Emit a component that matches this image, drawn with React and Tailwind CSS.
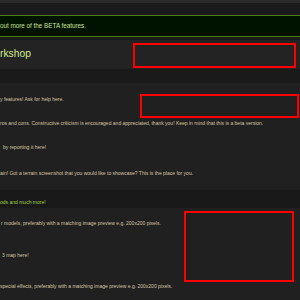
import React from 'react';

// Row of small forum description text, vertically centred in a fixed-height strip
function Line({ children, className = '' }) {
  return (
    <div className={`flex items-center whitespace-nowrap text-[5px] text-[#d6c6a2] ${className}`}>
      {children}
    </div>
  );
}

function Redact({ className }) {
  return <div className={`absolute border-2 border-[#ff0000] ${className}`} />;
}

export default function App() {
  return (
    <div className="relative w-[300px] h-[300px] overflow-hidden bg-[#202020] font-['Liberation_Sans',Arial,sans-serif]">
      <div className="h-[3px] bg-[#2b2b2b]" />
      <div className="h-[12px] bg-[#1a1a1a]" />

      {/* beta notice */}
      <div className="h-[22px] flex items-center border-y border-[#4d7c12] bg-[#001300] whitespace-nowrap text-[6.3px] text-[#cbe09a]">
        out more of the BETA features.
      </div>
      <div className="h-[3px] bg-[#1a1a1a]" />

      {/* section title */}
      <div className="h-[29px] flex items-center bg-[#232323] text-[10.3px] text-[#d2ec8a] leading-none">
        rkshop
      </div>
      <div className="h-[14px] bg-[#1a1a1a]" />

      {/* forums */}
      <div className="flex flex-col h-[107px] pt-[5px] bg-[#202020]">
        <Line className="h-[24px]">y features! Ask for help here.</Line>
        <Line className="h-[24px]">
          ros and cons. Constructive criticism is encouraged and appreciated, thank you! Keep in mind that this is a beta version.
        </Line>
        <Line className="h-[24px] pl-[3px]">by reporting it here!</Line>
        <Line className="h-[28px]">
          ain! Got a terrain screenshot that you would like to showcase? This is the place for you.
        </Line>
      </div>

      {/* category bar */}
      <div className="h-[18px] flex items-end pb-[2px] bg-[#191919] whitespace-nowrap text-[5px] text-[#a6d23c]">
        ods and much more!
      </div>

      <div className="flex flex-col pt-[4px] bg-[#202020]">
        <Line className="h-[24px] pl-[1px]">
          r models, preferably with a matching image preview e.g. 200x200 pixels.
        </Line>
        <Line className="h-[8px]" />
        <Line className="h-[24px] pl-[2px]">3 map here!</Line>
        <Line className="h-[7px]" />
        <Line className="h-[24px]">
          special effects, preferably with a matching image preview e.g. 200x200 pixels.
        </Line>
      </div>

      <Redact className="left-[133px] top-[43px] w-[163px] h-[25px]" />
      <Redact className="left-[140px] top-[94px] w-[159px] h-[24px]" />
      <Redact className="left-[184px] top-[211px] w-[110px] h-[71px]" />
    </div>
  );
}
